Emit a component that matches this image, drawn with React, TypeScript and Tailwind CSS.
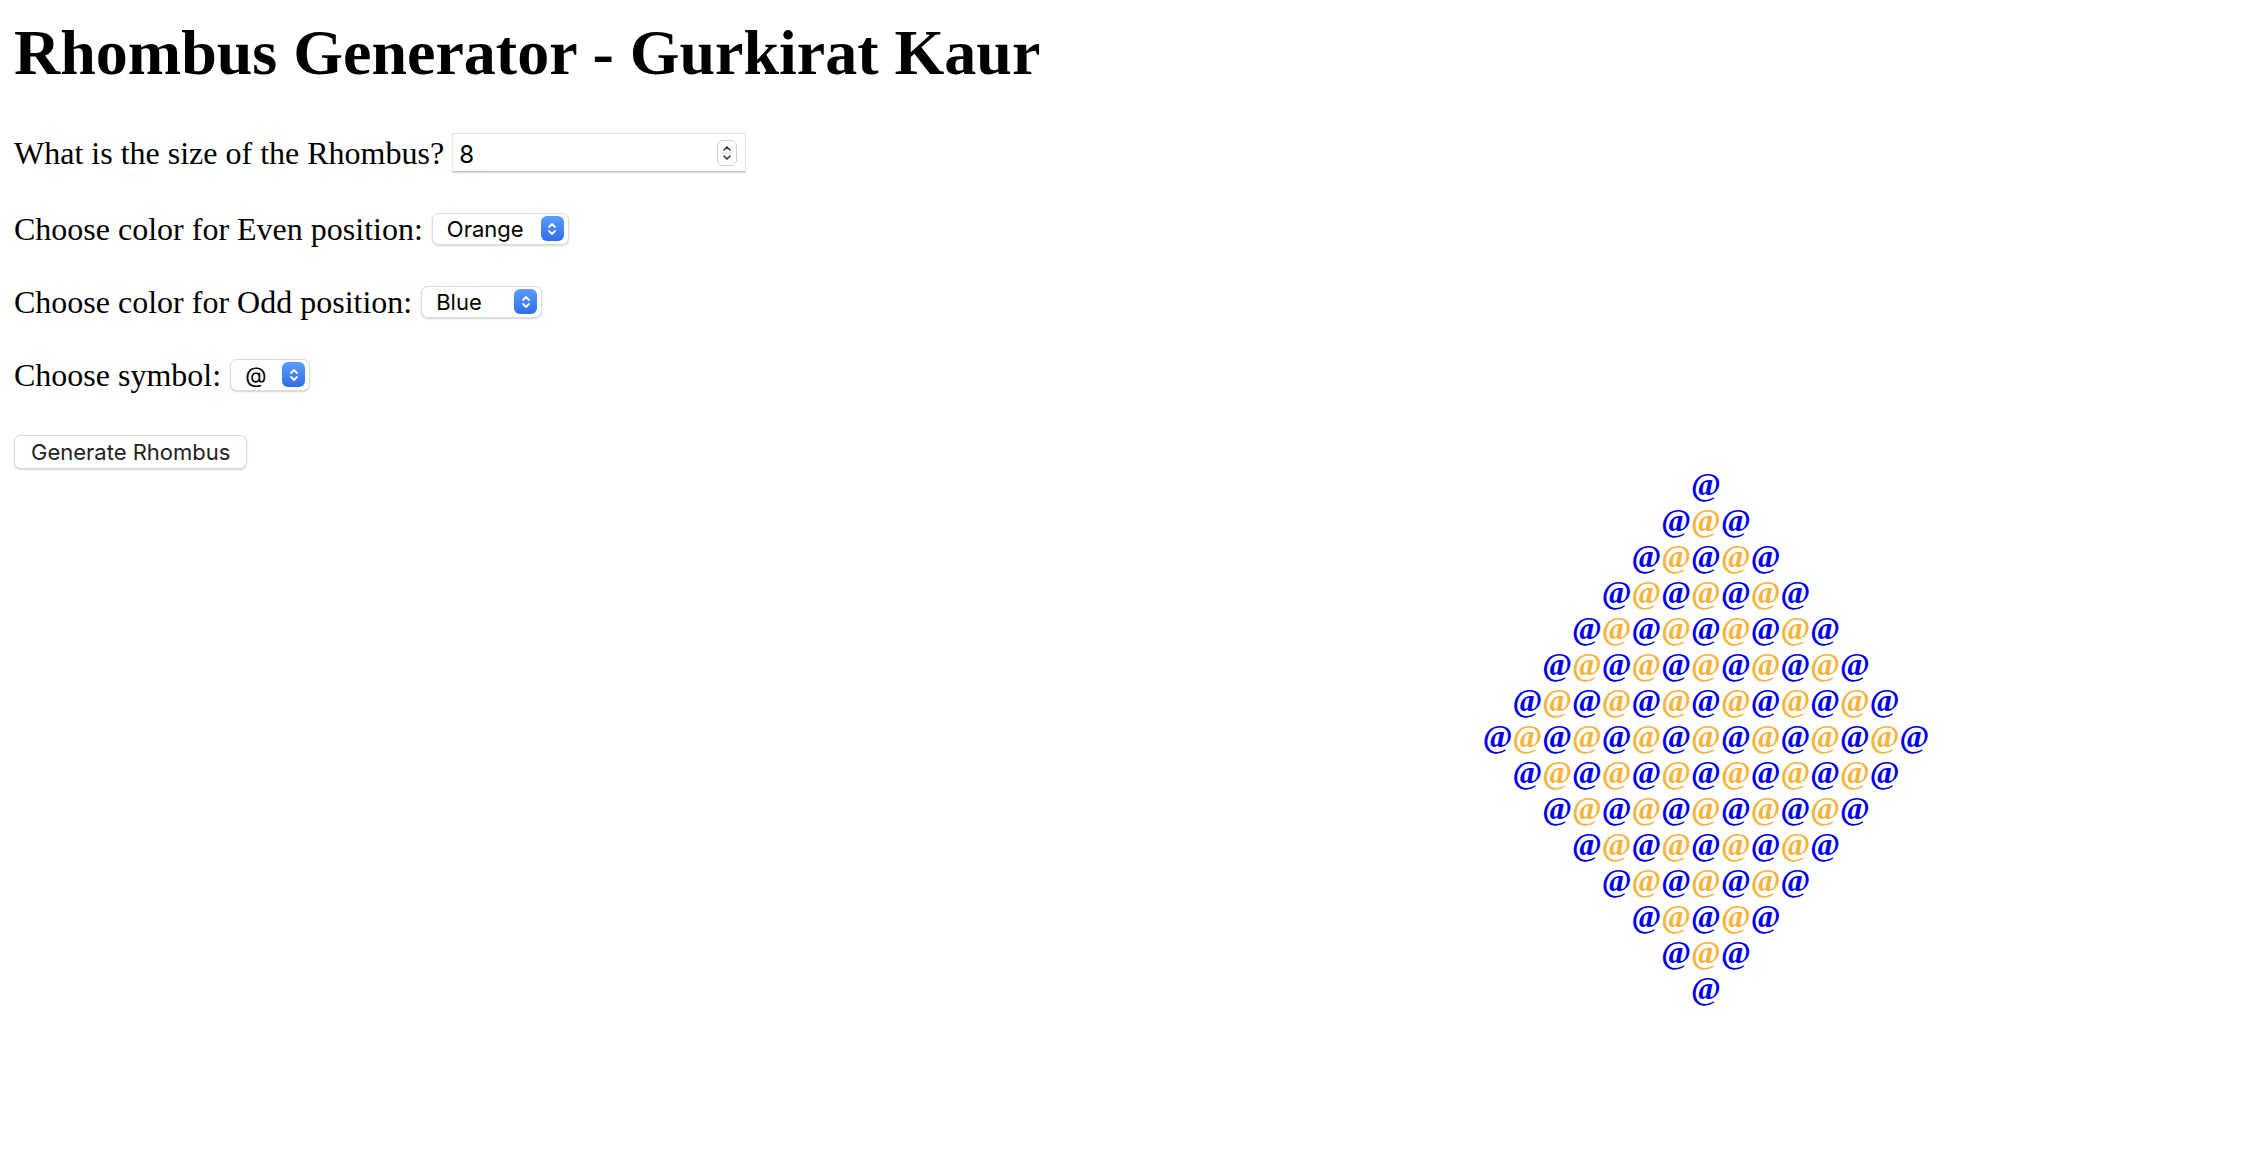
import React from "react";

const SIZE = 8;
const BLUE = "#0000e8";
const ORANGE = "#f6b43e";

function SelectArrow() {
  return (
    <span className="flex h-[25px] w-[23px] items-center justify-center rounded-[6px] bg-gradient-to-b from-[#5b9cfa] to-[#2f6fe8]">
      <svg width="10" height="16" viewBox="0 0 10 16" fill="none">
        <path d="M2 6 L5 3 L8 6" stroke="white" strokeWidth="1.8" strokeLinecap="round" strokeLinejoin="round" />
        <path d="M2 10 L5 13 L8 10" stroke="white" strokeWidth="1.8" strokeLinecap="round" strokeLinejoin="round" />
      </svg>
    </span>
  );
}

function FakeSelect({ value, width }: { value: string; width: string }) {
  return (
    <div
      className={`flex h-[32px] ${width} items-center justify-between rounded-[7px] border border-[#dcdcdc] bg-white pl-[14px] pr-[4px] text-[22px] text-black shadow-[0_1px_2px_rgba(0,0,0,0.18)]`}
      style={{ fontFamily: "Inter, 'Liberation Sans', sans-serif" }}
    >
      <span className="mt-[1px]">{value}</span>
      <SelectArrow />
    </div>
  );
}

function Rhombus() {
  const rows: number[] = [];
  for (let i = 1; i <= SIZE; i++) rows.push(i * 2 - 1);
  for (let i = SIZE - 1; i >= 1; i--) rows.push(i * 2 - 1);

  return (
    <div className="flex justify-end">
      <div className="w-[1072px] text-center text-[32px] font-bold leading-[36px]">
        {rows.map((count, r) => (
          <div key={r}>
            {Array.from({ length: count }).map((_, i) => (
              <span key={i} style={{ color: i % 2 === 0 ? BLUE : ORANGE }}>
                @
              </span>
            ))}
          </div>
        ))}
      </div>
    </div>
  );
}

export default function App() {
  return (
    <div
      className="min-h-[1170px] bg-white pl-[14px] pt-[16px] text-black"
      style={{ fontFamily: "'Liberation Serif', 'Times New Roman', serif" }}
    >
      <h1 className="text-[64px] font-bold leading-[74px]">
        Rhombus Generator - Gurkirat Kaur
      </h1>

      <div className="mt-[43px] flex h-[39px] items-center text-[32px]">
        <span>What is the size of the Rhombus?</span>
        <div className="ml-[8px] flex h-[39px] w-[294px] items-center justify-between border border-[#e2e2e2] border-b-[#c4c4c4] bg-white pl-[6px] pr-[8px] shadow-[0_1px_1px_rgba(0,0,0,0.12)]">
          <span
            className="mt-[4px] text-[24px]"
            style={{ fontFamily: "Inter, 'Liberation Sans', sans-serif" }}
          >
            8
          </span>
          <span className="flex h-[26px] w-[20px] flex-col items-center justify-center rounded-[6px] border border-[#cfcfcf] bg-white">
            <svg width="12" height="22" viewBox="0 0 12 22" fill="none">
              <path d="M3 8 L6 5 L9 8" stroke="#333" strokeWidth="1.6" strokeLinecap="round" strokeLinejoin="round" />
              <line x1="0" y1="11" x2="12" y2="11" stroke="#d8d8d8" strokeWidth="1" />
              <path d="M3 14 L6 17 L9 14" stroke="#333" strokeWidth="1.6" strokeLinecap="round" strokeLinejoin="round" />
            </svg>
          </span>
        </div>
      </div>

      <div className="mt-[40px] flex h-[33px] items-center text-[32px]">
        <span>Choose color for Even position:</span>
        <div className="ml-[9px]">
          <FakeSelect value="Orange" width="w-[137px]" />
        </div>
      </div>

      <div className="mt-[40px] flex h-[33px] items-center text-[32px]">
        <span>Choose color for Odd position:</span>
        <div className="ml-[9px]">
          <FakeSelect value="Blue" width="w-[121px]" />
        </div>
      </div>

      <div className="mt-[40px] flex h-[33px] items-center text-[32px]">
        <span>Choose symbol:</span>
        <div className="ml-[9px]">
          <FakeSelect value="@" width="w-[80px]" />
        </div>
      </div>

      <div className="mt-[44px] flex">
        <button
          className="h-[34px] rounded-[7px] border border-[#d8d8d8] bg-white px-[16px] text-[22px] text-[#222] shadow-[0_1px_2px_rgba(0,0,0,0.18)]"
          style={{ fontFamily: "Inter, 'Liberation Sans', sans-serif" }}
        >
          Generate Rhombus
        </button>
      </div>

      <div className="-mt-[3px]">
        <Rhombus />
      </div>
    </div>
  );
}
